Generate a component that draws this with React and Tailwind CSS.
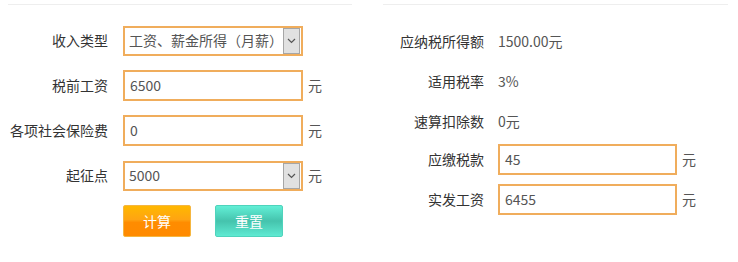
import React from 'react';

const font = { fontFamily: '"Noto Sans CJK SC", "Noto Sans", sans-serif' };

const Chevron = () => (
  <svg width="9" height="6" viewBox="0 0 9 6" className="block">
    <path d="M1 1 L4.5 4.5 L8 1" fill="none" stroke="#555" strokeWidth="1.2" />
  </svg>
);

const SelectBox = ({ value }) => (
  <div className="flex h-[30px] w-[180px] items-center border-2 border-[#f0ad5c] bg-white">
    <span className="flex-1 truncate pl-[4px] text-[14px] text-[#555]">{value}</span>
    <span className="mr-[1px] flex h-[26px] w-[17px] items-center justify-center border border-[#a6a6a6] bg-[#e1e1e1]">
      <Chevron />
    </span>
  </div>
);

const InputBox = ({ value, width = 'w-[180px]' }) => (
  <div className={`flex h-[31px] ${width} items-center border-2 border-[#f0ad5c] bg-white pl-[5px] text-[14px] text-[#555]`}>
    {value}
  </div>
);

const LeftRow = ({ label, children, unit }) => (
  <div className="flex h-[31px] items-center">
    <div className="w-[100px] text-right text-[14px] text-[#333]">{label}</div>
    <div className="ml-[15px]">{children}</div>
    {unit && <span className="ml-[5px] text-[14px] text-[#555]">{unit}</span>}
  </div>
);

const RightText = ({ label, value }) => (
  <div className="flex h-[40px] items-center">
    <div className="w-[101px] text-right text-[14px] text-[#333]">{label}</div>
    <div className="ml-[14px] text-[14px] text-[#555]">{value}</div>
  </div>
);

const RightInput = ({ label, value }) => (
  <div className="flex h-[31px] items-center">
    <div className="w-[101px] text-right text-[14px] text-[#333]">{label}</div>
    <div className="ml-[14px]">
      <InputBox value={value} width="w-[179px]" />
    </div>
    <span className="ml-[5px] text-[14px] text-[#555]">元</span>
  </div>
);

const App = () => {
  return (
    <div className="flex h-[262px] w-[738px] bg-white pt-[4px]" style={font}>
      {/* left form */}
      <div className="ml-[8px] w-[344px] border-t border-[#eeeeee] pt-[20px]">
        <div className="flex flex-col gap-[14px]">
          <LeftRow label="收入类型">
            <SelectBox value="工资、薪金所得（月薪）" />
          </LeftRow>
          <LeftRow label="税前工资" unit="元">
            <InputBox value="6500" />
          </LeftRow>
          <LeftRow label="各项社会保险费" unit="元">
            <InputBox value="0" />
          </LeftRow>
          <LeftRow label="起征点" unit="元">
            <SelectBox value="5000" />
          </LeftRow>
          <div className="flex h-[32px] pl-[115px]">
            <button className="h-[32px] w-[68px] rounded-[2px] border border-[#f5b640] bg-[linear-gradient(#ffb800_0%,#ffa412_45%,#ff8c00_55%,#ff8a00_100%)] text-[14px] text-white">
              计算
            </button>
            <button className="ml-[24px] h-[32px] w-[68px] rounded-[2px] border border-[#4fd3bc] bg-[linear-gradient(#62efd6_0%,#45c3ad_50%,#5fead2_100%)] text-[14px] text-white">
              重置
            </button>
          </div>
        </div>
      </div>

      {/* right results */}
      <div className="ml-[31px] w-[345px] border-t border-[#eeeeee] pt-[16px]">
        <RightText label="应纳税所得额" value="1500.00元" />
        <RightText label="适用税率" value="3%" />
        <RightText label="速算扣除数" value="0元" />
        <div className="mt-[3px] flex flex-col gap-[9px]">
          <RightInput label="应缴税款" value="45" />
          <RightInput label="实发工资" value="6455" />
        </div>
      </div>
    </div>
  );
};

export default App;
